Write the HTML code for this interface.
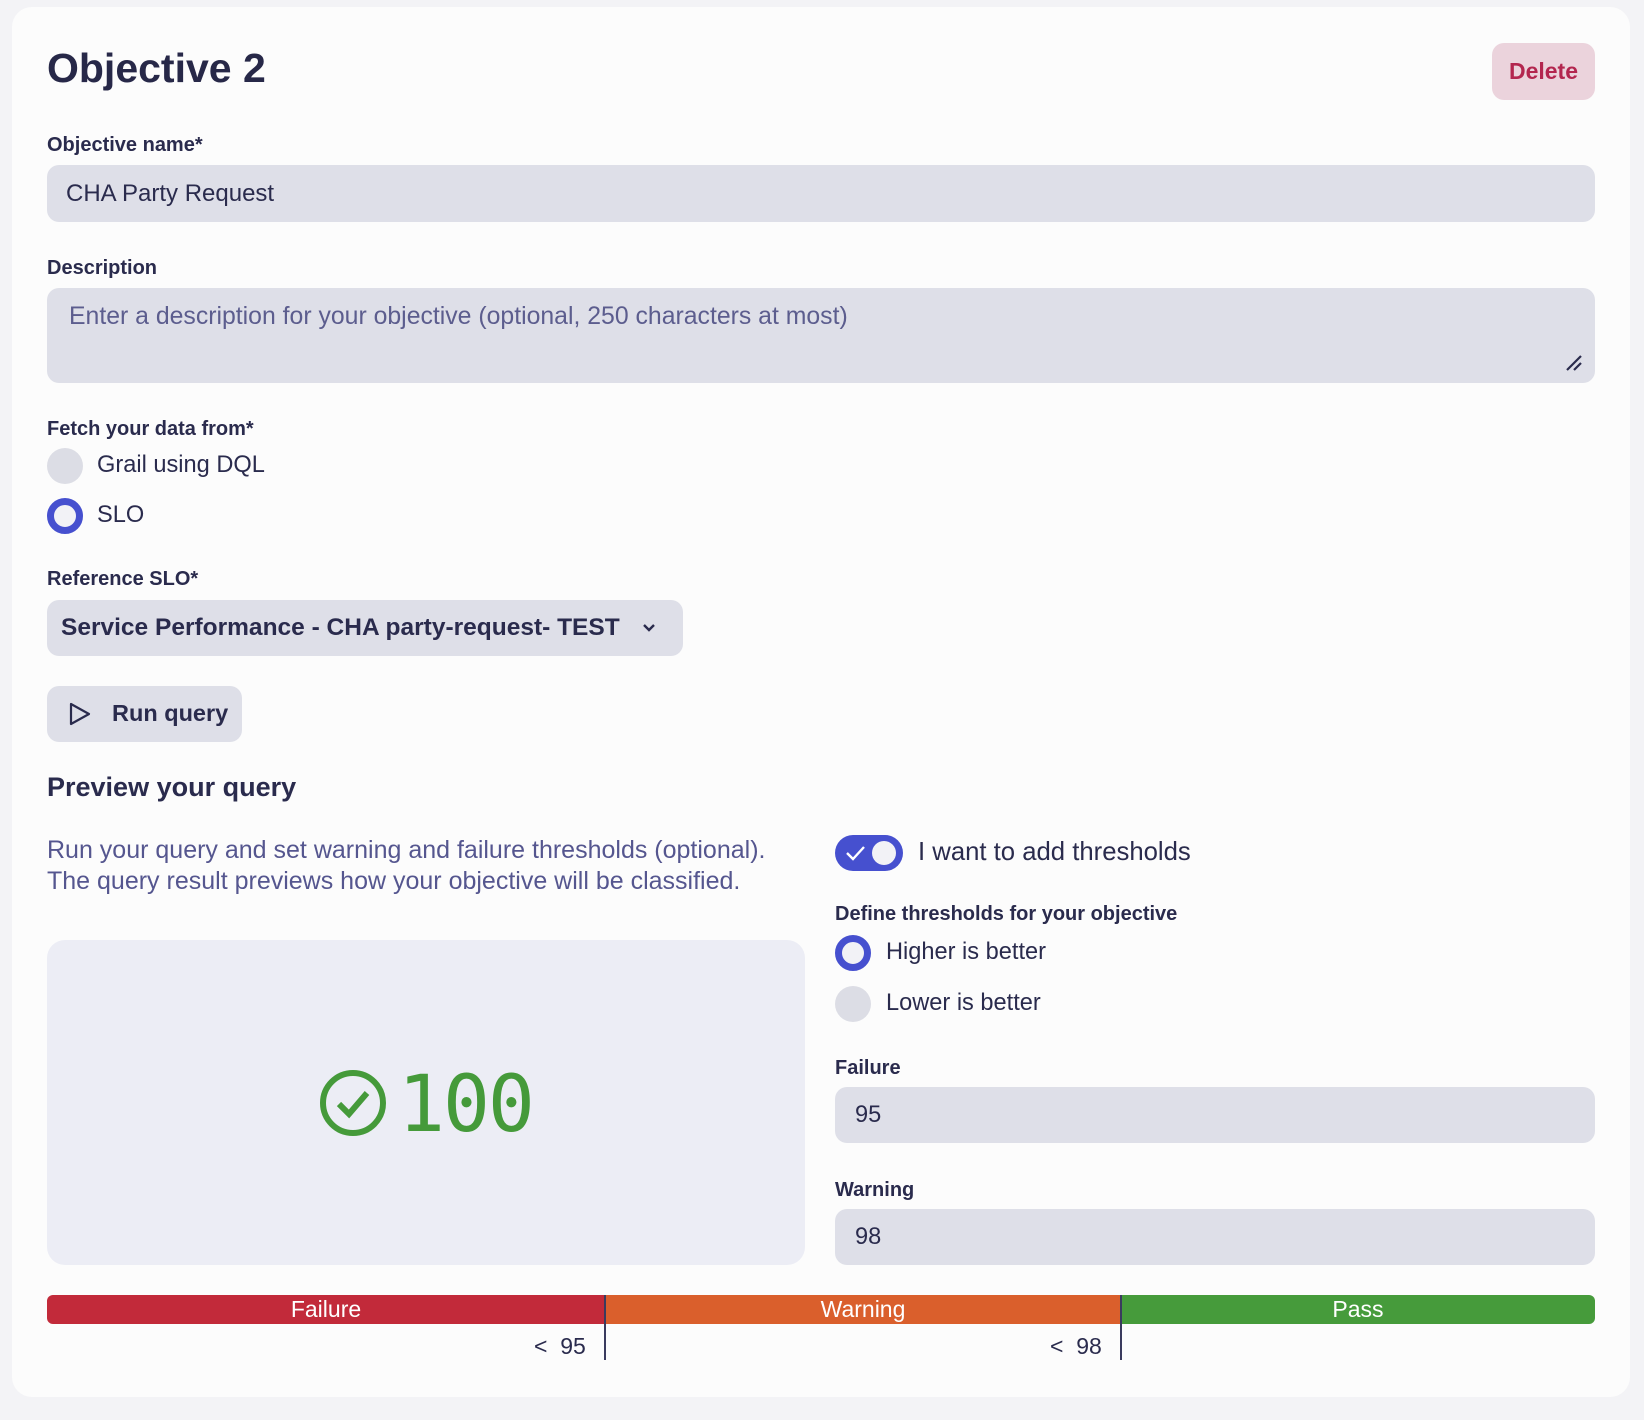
<!DOCTYPE html>
<html><head><meta charset="utf-8"><style>
*{box-sizing:border-box;margin:0;padding:0}
body{width:1644px;height:1420px;background:#f3f3f6;font-family:"Liberation Sans",sans-serif;color:#2a2b4d;position:relative;overflow:hidden}
.card{position:absolute;left:12px;top:7px;width:1618px;height:1390px;background:#fcfcfc;border-radius:20px}
.a{position:absolute;white-space:nowrap}
.lbl{font-size:20px;font-weight:bold;color:#2a2b4d}
.inp{position:absolute;background:#dedfe8;border-radius:12px}
.radio{position:absolute;width:36px;height:36px;border-radius:50%;background:#dcdde5}
.radio.on{background:#f2f2f6;border:7px solid #4650cf}
.t{font-size:23.6px;color:#2a2b4d}
</style></head><body>
<div class="card"></div>
<div class="a" style="left:47px;top:45px;font-size:41px;font-weight:bold;color:#272848">Objective 2</div>
<div class="a" style="left:1492px;top:43px;width:103px;height:57px;background:#ebd3dc;border-radius:12px;color:#b3264f;font-size:23px;font-weight:bold;text-align:center;line-height:57px">Delete</div>

<div class="a lbl" style="left:47px;top:134px">Objective name*</div>
<div class="inp" style="left:47px;top:165px;width:1548px;height:57px"></div>
<div class="a t" style="left:66px;top:180px;font-size:24px">CHA Party Request</div>

<div class="a lbl" style="left:47px;top:257px">Description</div>
<div class="inp" style="left:47px;top:288px;width:1548px;height:95px"></div>
<div class="a" style="left:69px;top:303px;font-size:24.8px;color:#5c5d8e">Enter a description for your objective (optional, 250 characters at most)</div>
<svg class="a" style="left:1565px;top:354px" width="18" height="18"><path d="M2 16L16 2M9 16L16 9" stroke="#2a2b4d" stroke-width="2.2"/></svg>

<div class="a lbl" style="left:47px;top:418px">Fetch your data from*</div>
<div class="radio" style="left:47px;top:448px"></div>
<div class="a t" style="left:97px;top:452px">Grail using DQL</div>
<div class="radio on" style="left:47px;top:498px"></div>
<div class="a t" style="left:97px;top:502px">SLO</div>

<div class="a lbl" style="left:47px;top:568px">Reference SLO*</div>
<div class="inp" style="left:47px;top:600px;width:636px;height:56px"></div>
<div class="a" style="left:61px;top:614px;font-size:24.5px;font-weight:bold;color:#2a2b4d">Service Performance - CHA party-request- TEST</div>
<svg class="a" style="left:641px;top:620px" width="16" height="16"><path d="M3 5L8 10L13 5" stroke="#2a2b4d" stroke-width="2.4" fill="none"/></svg>

<div class="inp" style="left:47px;top:686px;width:195px;height:56px"></div>
<svg class="a" style="left:68px;top:702px" width="24" height="24"><path d="M3 2L21 12L3 22Z" stroke="#2a2b4d" stroke-width="2.2" fill="none" stroke-linejoin="round"/></svg>
<div class="a" style="left:112px;top:700px;font-size:23.5px;font-weight:bold;color:#2a2b4d">Run query</div>

<div class="a" style="left:47px;top:772px;font-size:27px;font-weight:bold;color:#2a2b4d">Preview your query</div>
<div class="a" style="left:47px;top:835px;font-size:25px;color:#55568f;line-height:31px">Run your query and set warning and failure thresholds (optional).<br>The query result previews how your objective will be classified.</div>

<div class="a" style="left:47px;top:940px;width:758px;height:325px;background:#ecedf5;border-radius:18px"></div>
<svg class="a" style="left:318px;top:1068px" width="70" height="70"><circle cx="35" cy="35" r="30" stroke="#459a3a" stroke-width="6" fill="none"/><path d="M21 36L31 46L49 25" stroke="#459a3a" stroke-width="6" fill="none"/></svg>
<div class="a" style="left:398px;top:1060px;font-family:'DejaVu Sans Mono',monospace;font-size:78px;color:#459a3a;letter-spacing:-2px">100</div>

<div class="a" style="left:835px;top:835px;width:68px;height:36px;border-radius:18px;background:#4650cf"></div>
<div class="a" style="left:872px;top:841px;width:24px;height:24px;border-radius:50%;background:#f2f2f6"></div>
<svg class="a" style="left:845px;top:843px" width="22" height="20"><path d="M2 10L8 16L19 4" stroke="#fff" stroke-width="2.4" fill="none"/></svg>
<div class="a t" style="left:918px;top:838px;font-size:25.7px">I want to add thresholds</div>

<div class="a lbl" style="left:835px;top:903px">Define thresholds for your objective</div>
<div class="radio on" style="left:835px;top:935px"></div>
<div class="a t" style="left:886px;top:939px">Higher is better</div>
<div class="radio" style="left:835px;top:986px"></div>
<div class="a t" style="left:886px;top:990px">Lower is better</div>

<div class="a lbl" style="left:835px;top:1057px">Failure</div>
<div class="inp" style="left:835px;top:1087px;width:760px;height:56px"></div>
<div class="a t" style="left:855px;top:1102px">95</div>
<div class="a lbl" style="left:835px;top:1179px">Warning</div>
<div class="inp" style="left:835px;top:1209px;width:760px;height:56px"></div>
<div class="a t" style="left:855px;top:1224px">98</div>

<div class="a" style="left:47px;top:1295px;width:558px;height:29px;background:#c22a3a;border-radius:6px 0 0 6px;color:#fff;font-size:23px;text-align:center;line-height:29px">Failure</div>
<div class="a" style="left:605px;top:1295px;width:516px;height:29px;background:#da5f2c;color:#fff;font-size:23px;text-align:center;line-height:29px">Warning</div>
<div class="a" style="left:1121px;top:1295px;width:474px;height:29px;background:#469b3b;border-radius:0 6px 6px 0;color:#fff;font-size:23px;text-align:center;line-height:29px">Pass</div>
<div class="a" style="left:604px;top:1295px;width:2px;height:65px;background:#3a3b5e"></div>
<div class="a" style="left:1120px;top:1295px;width:2px;height:65px;background:#3a3b5e"></div>
<div class="a t" style="left:534px;top:1333px;font-size:23px">&lt;&nbsp; 95</div>
<div class="a t" style="left:1050px;top:1333px;font-size:23px">&lt;&nbsp; 98</div>
</body></html>
